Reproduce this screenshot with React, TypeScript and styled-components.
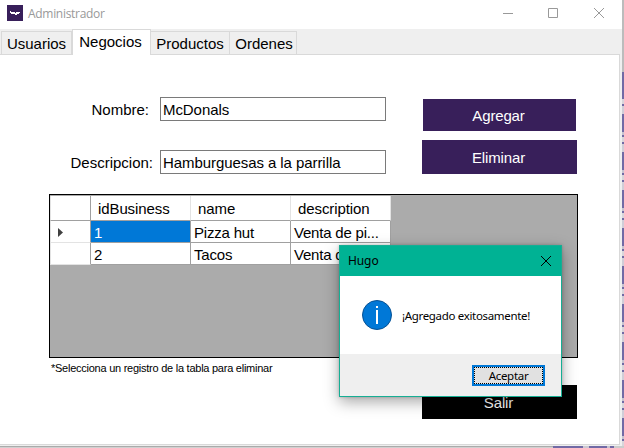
import React from 'react';
import styled, { createGlobalStyle } from 'styled-components';

const GlobalStyle = createGlobalStyle`
  * { box-sizing: border-box; }
  html, body { margin: 0; padding: 0; overflow: hidden; }
  body { font: 15px/17px "Liberation Sans", Arial, sans-serif; color: #000; }
  button, input { font: inherit; color: inherit; margin: 0; border-radius: 0; outline: none; }
`;

const Desktop = styled.div`
  position: relative;
  width: 624px;
  height: 448px;
  display: grid;
  grid-template: 446px 2px / 622px 2px;
  overflow: hidden;
  background: #d2d0d4;
`;

const Window = styled.main`
  display: flex;
  flex-direction: column;
  background: #efefef;
`;

const TitleBar = styled.header`
  display: flex;
  align-items: center;
  height: 29px;
  flex: none;
  padding-left: 7px;
  background: #fff;
  color: #999;
`;

const WindowTitle = styled.span`
  flex: 1;
  margin: 0 0 1px 5px;
  font: 12px/16px "Open Sans", "Noto Sans", sans-serif;
  letter-spacing: -0.3px;
`;

const AppMark = styled.svg`
  display: block;
  margin-bottom: 3px;
`;

const CaptionIcon = styled.svg`
  display: block;
  width: 46px;
  height: 29px;
  fill: none;
  stroke: #999;
  stroke-width: 1;
`;

const TabList = styled.nav`
  display: flex;
  align-items: flex-end;
  height: 25px;
  flex: none;
  padding-left: 1px;
`;

const Tab = styled.button<{ $width: number; $active?: boolean; $shift?: number }>`
  width: ${p => p.$width}px;
  height: ${p => (p.$active ? 26 : 23)}px;
  margin-bottom: ${p => (p.$active ? -1 : 0)}px;
  position: relative;
  z-index: ${p => (p.$active ? 1 : 0)};
  padding: ${p => (p.$active ? '0 2px 3px 0' : `0 0 0 ${p.$shift ?? 0}px`)};
  border: solid #d9d9d9;
  border-width: ${p => (p.$active ? '1px 1px 0' : '1px 1px 0 0')};
  background: ${p => (p.$active ? '#fff' : '#efefef')};
  line-height: 17px;
  white-space: nowrap;
  &:first-child { border-left-width: 1px; }
`;

const Page = styled.section`
  width: 620px;
  height: 391px;
  border: solid #d9d9d9;
  border-width: 1px 1px 1px 0;
  padding: 42px 0 0 49px;
  background: #fff;
`;

const TopArea = styled.div`
  display: flex;
  height: 97px;
`;

const Fields = styled.form`
  width: 373px;
  display: flex;
  flex-direction: column;
  gap: 29px;
`;

const Field = styled.label`
  display: grid;
  grid-template-columns: 104px 226px;
  column-gap: 7px;
  align-items: center;
  height: 24px;
`;

const FieldLabel = styled.span<{ $inset: number }>`
  padding: 1px ${p => p.$inset}px 0 0;
  text-align: right;
  white-space: nowrap;
`;

const TextInput = styled.input`
  width: 226px;
  height: 24px;
  border: 1px solid #7a7a7a;
  padding: 1px 2px 0;
  background: #fff;
  letter-spacing: -0.07px;
`;

const Actions = styled.div`
  display: flex;
  flex-direction: column;
  align-items: center;
  gap: 9px;
  width: 155px;
  padding-top: 2px;
`;

const ActionButton = styled.button<{ $compact?: boolean; $dark?: boolean }>`
  flex: none;
  width: ${p => (p.$compact ? 153 : 155)}px;
  height: ${p => (p.$compact ? 32 : 34)}px;
  border: 0;
  padding: ${p => (p.$compact ? '0 2px 0 0' : '1px 2px 0 0')};
  background: ${p => (p.$dark ? '#000' : '#381f5a')};
  color: #fff;
  letter-spacing: -0.15px;
`;

const DataGrid = styled.div`
  width: 529px;
  height: 164px;
  border: 1px solid #000;
  padding-top: 1px;
  background: #ababab;
`;

const GridRow = styled.div<{ $header?: boolean }>`
  display: grid;
  grid-template-columns: 41px repeat(3, 100px);
  width: 341px;
  height: ${p => (p.$header ? 25 : 22)}px;
  background: #fff;
`;

const RowHeader = styled.div<{ $header?: boolean }>`
  display: flex;
  align-items: center;
  padding-left: 7px;
  border: solid #a0a0a0;
  border-width: 0 1px 1px 1px;
  border-left-color: #e3e3e3;
  padding-top: 2px;
  border-bottom-color: ${p => (p.$header ? '#a0a0a0' : '#e3e3e3')};
`;

const ColumnHeader = styled.div`
  border: solid #e3e3e3;
  border-width: 0 1px 1px 0;
  border-bottom-color: #a0a0a0;
  padding: 4px 0 0 7px;
  letter-spacing: -0.1px;
`;

const Cell = styled.div<{ $selected?: boolean }>`
  border: solid #a0a0a0;
  border-width: 0 1px 1px 0;
  padding: 3px 0 0 3px;
  background: ${p => (p.$selected ? '#0078d7' : '#fff')};
  color: ${p => (p.$selected ? '#fff' : '#000')};
  letter-spacing: -0.2px;
  overflow: hidden;
  white-space: nowrap;
`;

const Hint = styled.p`
  margin: 3px 0 0 2px;
  height: 24px;
  font-size: 11px;
  line-height: 15px;
  letter-spacing: -0.25px;
  white-space: nowrap;
`;

const ExitRow = styled.div`
  padding-left: 373px;
`;

const RightBackdrop = styled.div`
  background:
    linear-gradient(#bcbcbc, #bcbcbc) 0 0 / 2px 72px no-repeat,
    linear-gradient(#716aa5, #716aa5) 0 72px / 2px 25px no-repeat,
    repeating-linear-gradient(#716aa5 0 18px, #c5c2d0 18px 21px, #716aa5 21px 23px, #d8d5da 23px 28px, #716aa5 28px 30px, #d0cdd7 30px 38px);
`;

const BottomBackdrop = styled.div`
  grid-column: 1 / -1;
  background:
    linear-gradient(90deg, #aaa 553px, transparent 553px) 0 0 / 100% 1px no-repeat,
    linear-gradient(90deg, #d0d0d0 553px, #716aa5 553px 583px, #ccc8d2 583px 589px, #716aa5 589px 607px, #c5c2d0 607px 610px, #716aa5 610px 614px, #ccc 614px);
`;

const Dialog = styled.div`
  position: absolute;
  left: 339px;
  top: 245px;
  width: 223px;
  height: 152px;
  display: flex;
  flex-direction: column;
  border: 1px solid #16ae94;
  background: #fff;
  box-shadow: 0 5px 14px rgba(0, 0, 0, 0.34), 0 0 3px rgba(0, 0, 0, 0.2);
  font: 12px/16px "Noto Sans", "Open Sans", sans-serif;
`;

const DialogHeader = styled.div`
  display: flex;
  align-items: center;
  justify-content: space-between;
  height: 30px;
  padding: 0 9px 0 8px;
  background: #00b294;
`;

const DialogTitle = styled.span`
  letter-spacing: -0.1px;
`;

const DialogContent = styled.div`
  display: flex;
  align-items: center;
  gap: 10px;
  height: 78px;
  padding-left: 22px;
`;

const Message = styled.span`
  padding-top: 2px;
  font-size: 11.5px;
  letter-spacing: -0.33px;
  white-space: nowrap;
`;

const DialogFooter = styled.div`
  flex: 1;
  display: flex;
  justify-content: flex-end;
  padding: 11px 16px 0 0;
  background: #efefef;
`;

const AcceptButton = styled.button`
  width: 73px;
  height: 21px;
  border: 2px solid #0078d7;
  padding: 0;
  background: #e1e1e1;
`;

const FocusFrame = styled.span`
  display: block;
  height: 17px;
  border: 1px dotted #000;
  font-size: 11.5px;
  line-height: 16px;
  letter-spacing: -0.3px;
`;

const rows = [
  { id: '1', name: 'Pizza hut', description: 'Venta de pi...' },
  { id: '2', name: 'Tacos', description: 'Venta d' },
];

export default function App() {
  return (
    <>
      <GlobalStyle />
      <Desktop>
        <Window>
          <TitleBar>
            <AppMark width="16" height="16" viewBox="0 0 16 16" shapeRendering="crispEdges">
              <path fill="#381f5a" d="M0 0h16v16H0z" />
              <path fill="#fff" d="M3 6h1v1h4v1h1V7h4v1h-1v1h-2v1H8V9H4V8H3z" />
            </AppMark>
            <WindowTitle>Administrador</WindowTitle>
            <CaptionIcon viewBox="0 0 46 29"><path d="M19 13.5h10" /></CaptionIcon>
            <CaptionIcon viewBox="0 0 46 29"><path d="M18.5 8.5h9v9h-9z" /></CaptionIcon>
            <CaptionIcon viewBox="0 0 46 29"><path d="M18 8l10 10M28 8L18 18" /></CaptionIcon>
          </TitleBar>
          <TabList>
            <Tab $width={71}>Usuarios</Tab>
            <Tab $width={79} $active>Negocios</Tab>
            <Tab $width={79}>Productos</Tab>
            <Tab $width={67} $shift={2}>Ordenes</Tab>
          </TabList>
          <Page>
            <TopArea>
              <Fields>
                <Field>
                  <FieldLabel $inset={4}>Nombre:</FieldLabel>
                  <TextInput defaultValue="McDonals" />
                </Field>
                <Field>
                  <FieldLabel $inset={0}>Descripcion:</FieldLabel>
                  <TextInput defaultValue="Hamburguesas a la parrilla" />
                </Field>
              </Fields>
              <Actions>
                <ActionButton $compact>Agregar</ActionButton>
                <ActionButton>Eliminar</ActionButton>
              </Actions>
            </TopArea>
            <DataGrid>
              <GridRow $header>
                <RowHeader $header />
                <ColumnHeader>idBusiness</ColumnHeader>
                <ColumnHeader>name</ColumnHeader>
                <ColumnHeader>description</ColumnHeader>
              </GridRow>
              {rows.map((row, i) => (
                <GridRow key={row.id}>
                  <RowHeader>
                    {i === 0 && (
                      <svg width="5" height="9" viewBox="0 0 5 9"><path fill="#404040" d="M0 0l5 4.5L0 9z" /></svg>
                    )}
                  </RowHeader>
                  <Cell $selected={i === 0}>{row.id}</Cell>
                  <Cell>{row.name}</Cell>
                  <Cell>{row.description}</Cell>
                </GridRow>
              ))}
            </DataGrid>
            <Hint>*Selecciona un registro de la tabla para eliminar</Hint>
            <ExitRow><ActionButton $dark>Salir</ActionButton></ExitRow>
          </Page>
        </Window>
        <RightBackdrop />
        <BottomBackdrop />
        <Dialog role="dialog">
          <DialogHeader>
            <DialogTitle>Hugo</DialogTitle>
            <svg width="12" height="12" viewBox="0 0 12 12" stroke="#000" fill="none"><path d="M1 1l10 10M11 1L1 11" /></svg>
          </DialogHeader>
          <DialogContent>
            <svg width="30" height="30" viewBox="0 0 30 30">
              <circle cx="15" cy="15" r="14.5" fill="#0078d7" stroke="#075193" />
              <path fill="#fff" d="M14 6h2v2h-2zM14 10h2v14h-2z" />
            </svg>
            <Message>¡Agregado exitosamente!</Message>
          </DialogContent>
          <DialogFooter>
            <AcceptButton><FocusFrame>Aceptar</FocusFrame></AcceptButton>
          </DialogFooter>
        </Dialog>
      </Desktop>
    </>
  );
}
